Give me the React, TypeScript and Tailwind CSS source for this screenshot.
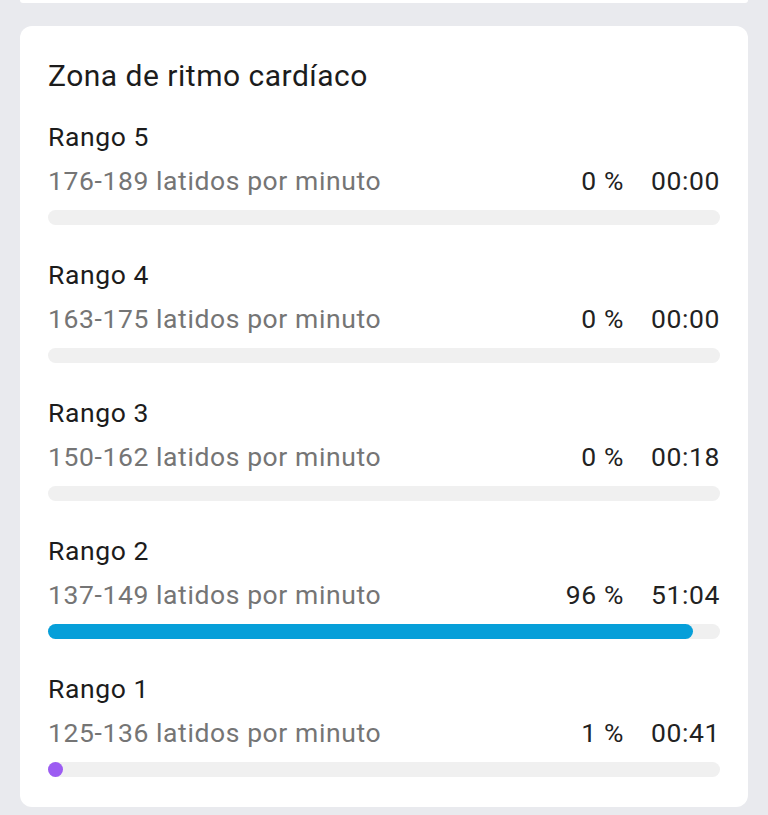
import React from "react";

type Zone = { name: string; range: string; pct: number; time: string; color: string };

const zones: Zone[] = [
  { name: "Rango 5", range: "176-189 latidos por minuto", pct: 0, time: "00:00", color: "" },
  { name: "Rango 4", range: "163-175 latidos por minuto", pct: 0, time: "00:00", color: "" },
  { name: "Rango 3", range: "150-162 latidos por minuto", pct: 0, time: "00:18", color: "" },
  { name: "Rango 2", range: "137-149 latidos por minuto", pct: 96, time: "51:04", color: "bg-[#069fd9]" },
  { name: "Rango 1", range: "125-136 latidos por minuto", pct: 1, time: "00:41", color: "bg-[#9c5cf2]" },
];

export default function App() {
  return (
    <div
      className="min-h-[815px] w-[768px] bg-[#e9eaee] overflow-hidden"
      style={{ fontFamily: "Roboto, 'Noto Sans', sans-serif" }}
    >
      <div className="mx-5 h-[3px] bg-white rounded-b-[3px]" />
      <div className="mx-5 mt-[23px] rounded-[12px] bg-white px-[28px] pt-[32px] pb-[30px]">
        <h2 className="text-[30px] leading-[36px] tracking-[0.5px] text-[#1c1c1c]">Zona de ritmo cardíaco</h2>
        <div className="mt-[25px] flex flex-col gap-[32px]">
          {zones.map((z) => (
            <div key={z.name} className="flex flex-col">
              <div className="text-[26.5px] leading-[36px] tracking-[0.6px] text-[#1c1c1c]">{z.name}</div>
              <div className="mt-[8px] flex items-center text-[26.5px] leading-[36px] tracking-[0.6px]">
                <span className="flex-1 text-[#757575]">{z.range}</span>
                <span className="text-[#222222]">{z.pct} %</span>
                <span className="ml-[27px] text-[#222222]">{z.time}</span>
              </div>
              <div className="mt-[11px] h-[15px] rounded-full bg-[#f0f0f0]">
                {z.pct > 0 && (
                  <div
                    className={`h-[15px] rounded-full ${z.color} min-w-[15px]`}
                    style={{ width: z.pct === 1 ? 15 : `${z.pct}%` }}
                  />
                )}
              </div>
            </div>
          ))}
        </div>
      </div>
    </div>
  );
}
